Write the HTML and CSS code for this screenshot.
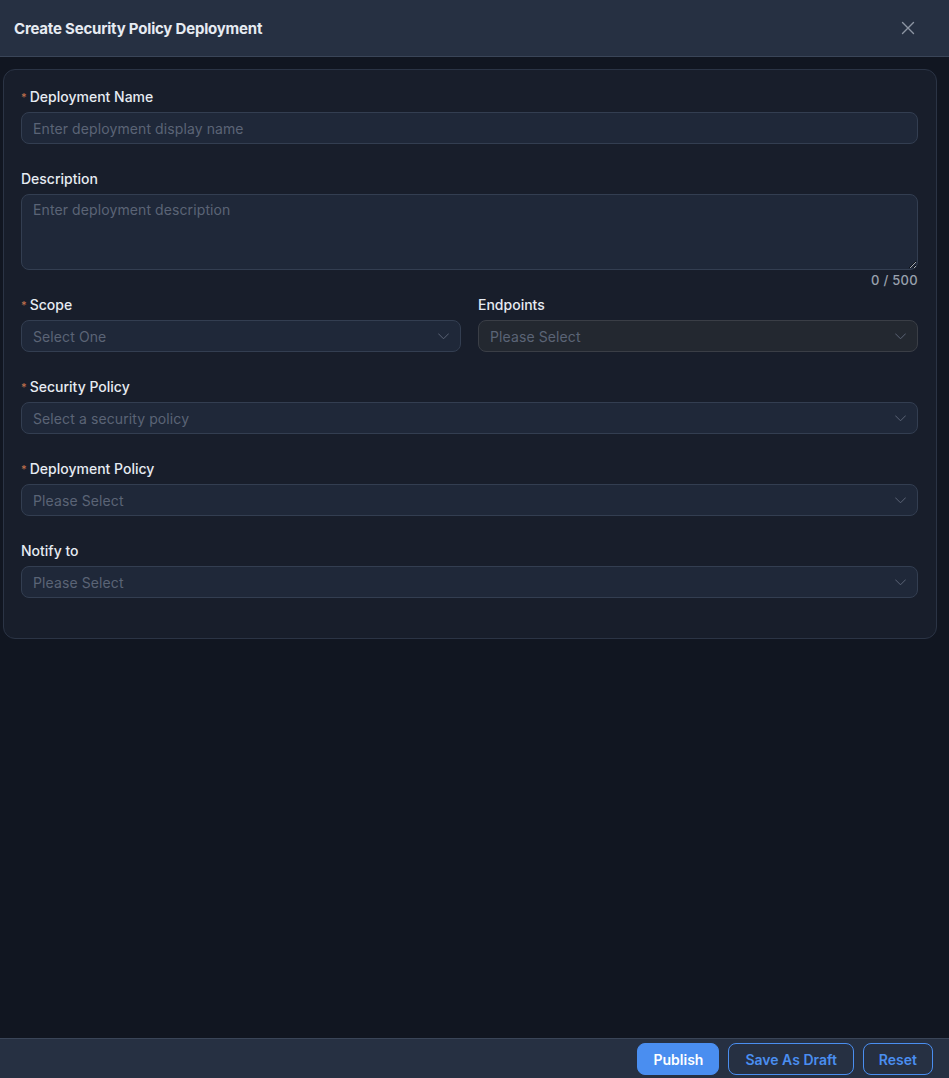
FILE: index.html
```html
<!DOCTYPE html>
<html lang="en">
<head>
  <meta charset="UTF-8">
  <meta name="viewport" content="width=device-width, initial-scale=1.0">
  <title>Create Security Policy Deployment</title>
  <link rel="stylesheet" href="styles.css">
</head>
<body>
  <div class="drawer">
    <header class="drawer-header">
      <div class="drawer-title">Create Security Policy Deployment</div>
      <button class="close-button" aria-label="Close">
        <svg width="14" height="14" viewBox="0 0 14 14" fill="none" stroke="currentColor" stroke-width="1.4" stroke-linecap="round">
          <path d="M1.5 1.5l11 11M12.5 1.5l-11 11"></path>
        </svg>
      </button>
    </header>

    <div class="drawer-body">
      <form class="form-card">
        <div class="form-item">
          <label class="form-label"><span class="required">*</span>Deployment Name</label>
          <input class="form-input" type="text" placeholder="Enter deployment display name">
        </div>

        <div class="form-item form-item-textarea">
          <label class="form-label">Description</label>
          <textarea class="form-input form-textarea" placeholder="Enter deployment description"></textarea>
          <div class="char-count">0 / 500</div>
        </div>

        <div class="form-row">
          <div class="form-item">
            <label class="form-label"><span class="required">*</span>Scope</label>
            <div class="form-select">
              <span class="select-placeholder">Select One</span>
              <svg class="chevron" width="11" height="7" viewBox="0 0 11 7" fill="none" stroke="currentColor" stroke-width="1" stroke-linecap="round" stroke-linejoin="round"><path d="M0.5 0.8l5 5 5-5"></path></svg>
            </div>
          </div>
          <div class="form-item">
            <label class="form-label">Endpoints</label>
            <div class="form-select disabled">
              <span class="select-placeholder">Please Select</span>
              <svg class="chevron" width="11" height="7" viewBox="0 0 11 7" fill="none" stroke="currentColor" stroke-width="1" stroke-linecap="round" stroke-linejoin="round"><path d="M0.5 0.8l5 5 5-5"></path></svg>
            </div>
          </div>
        </div>

        <div class="form-item">
          <label class="form-label"><span class="required">*</span>Security Policy</label>
          <div class="form-select">
            <span class="select-placeholder">Select a security policy</span>
            <svg class="chevron" width="11" height="7" viewBox="0 0 11 7" fill="none" stroke="currentColor" stroke-width="1" stroke-linecap="round" stroke-linejoin="round"><path d="M0.5 0.8l5 5 5-5"></path></svg>
          </div>
        </div>

        <div class="form-item">
          <label class="form-label"><span class="required">*</span>Deployment Policy</label>
          <div class="form-select">
            <span class="select-placeholder">Please Select</span>
            <svg class="chevron" width="11" height="7" viewBox="0 0 11 7" fill="none" stroke="currentColor" stroke-width="1" stroke-linecap="round" stroke-linejoin="round"><path d="M0.5 0.8l5 5 5-5"></path></svg>
          </div>
        </div>

        <div class="form-item">
          <label class="form-label">Notify to</label>
          <div class="form-select">
            <span class="select-placeholder">Please Select</span>
            <svg class="chevron" width="11" height="7" viewBox="0 0 11 7" fill="none" stroke="currentColor" stroke-width="1" stroke-linecap="round" stroke-linejoin="round"><path d="M0.5 0.8l5 5 5-5"></path></svg>
          </div>
        </div>
      </form>
    </div>

    <footer class="drawer-footer">
      <button class="btn btn-primary">Publish</button>
      <button class="btn btn-outline btn-draft">Save As Draft</button>
      <button class="btn btn-outline">Reset</button>
    </footer>
  </div>
</body>
</html>
```

FILE: styles.css
```css
* {
  box-sizing: border-box;
}

html, body {
  height: 100%;
}

body {
  font-family: Inter, 'Noto Sans', 'Liberation Sans', sans-serif;
  margin: 0;
  padding: 0;
  background-color: #111621;
  color: #e6ebf2;
}

.drawer {
  display: flex;
  flex-direction: column;
  height: 100vh;
}

.drawer-header {
  height: 57px;
  flex-shrink: 0;
  display: flex;
  align-items: center;
  justify-content: space-between;
  padding: 0 34px 0 14px;
  background-color: #263042;
  border-bottom: 1px solid #3a4558;
}

.drawer-title {
  font-size: 15px;
  font-weight: 700;
  letter-spacing: -0.2px;
  color: #e6ebf2;
}

.close-button {
  background: none;
  border: none;
  padding: 0;
  color: #8d95a3;
  cursor: pointer;
  display: flex;
}

.drawer-body {
  flex: 1;
  padding: 12px 12px 0 3px;
}

.form-card {
  background-color: #181e2b;
  border: 1px solid #2b3445;
  border-radius: 12px;
  padding: 16px 18px 16px 17px;
}

.form-item {
  display: flex;
  flex-direction: column;
  margin-bottom: 24px;
  min-width: 0;
}

.form-item-textarea {
  margin-bottom: 4px;
}

.form-row {
  display: grid;
  grid-template-columns: 1fr 1fr;
  gap: 17px;
}

.form-label {
  font-size: 14px;
  font-weight: 500;
  line-height: 22px;
  margin-bottom: 4px;
  color: #e6ebf2;
}

.required {
  color: #c0714d;
  font-size: 11px;
  margin-right: 3px;
  vertical-align: top;
}

.form-input,
.form-select {
  height: 32px;
  width: 100%;
  padding: 0 11px;
  background-color: #1f2839;
  border: 1px solid #333e51;
  border-radius: 8px;
  font-family: inherit;
  font-size: 14px;
  letter-spacing: 0.1px;
  color: #e6ebf2;
  outline: none;
}

.form-input::placeholder {
  color: #5b6476;
}

.form-textarea {
  height: 76px;
  padding: 6px 11px;
  resize: vertical;
  display: block;
}

.char-count {
  font-size: 13px;
  font-weight: 500;
  line-height: 20px;
  letter-spacing: 0.3px;
  text-align: right;
  color: #98a1ae;
}

.form-select {
  display: flex;
  align-items: center;
  justify-content: space-between;
  cursor: pointer;
}

.form-select.disabled {
  background-color: #232830;
  border-color: #3a3e46;
  cursor: not-allowed;
}

.select-placeholder {
  color: #5b6476;
}

.chevron {
  color: #5b6476;
}

.drawer-footer {
  height: 40px;
  flex-shrink: 0;
  display: flex;
  justify-content: flex-end;
  align-items: flex-start;
  gap: 9px;
  padding: 4px 16px 0;
  background-color: #263042;
  border-top: 1px solid #3a4558;
}

.btn {
  height: 32px;
  padding: 0 15px;
  border-radius: 8px;
  font-family: inherit;
  font-size: 14px;
  font-weight: 600;
  cursor: pointer;
}

.btn-draft {
  padding: 0 16px;
}

.btn-primary {
  background-color: #4a8ef0;
  border: 1px solid #4a8ef0;
  color: #ffffff;
}

.btn-outline {
  background: none;
  border: 1px solid #4a8ef0;
  color: #4a8ef0;
}
```
